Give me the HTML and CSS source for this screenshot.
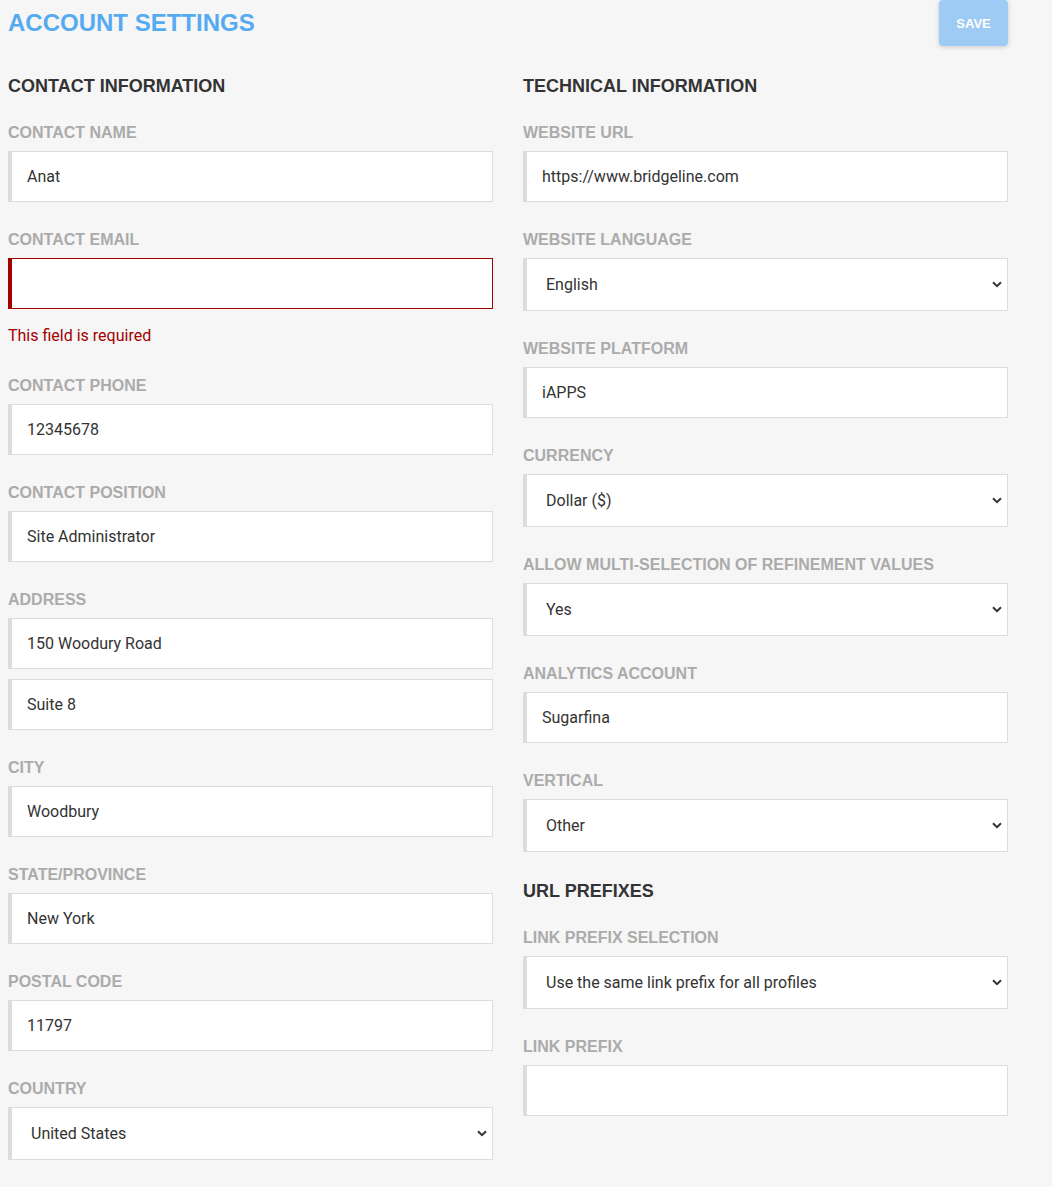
FILE: index.html
```html
<!DOCTYPE html>
<html lang="en">
<head>
<meta charset="utf-8">
<title>Account Settings</title>
<link rel="stylesheet" href="styles.css">
</head>
<body>
<div class="page">
  <header class="header">
    <h1 class="title">ACCOUNT SETTINGS</h1>
    <button class="save" type="button">SAVE</button>
  </header>
  <div class="columns">
    <section class="column">
      <h2 class="section-title">CONTACT INFORMATION</h2>
      <div class="field">
        <label class="label">CONTACT NAME</label>
        <input class="input" type="text" value="Anat">
      </div>
      <div class="field">
        <label class="label">CONTACT EMAIL</label>
        <input class="input input-error" type="text" value="">
        <div class="error">This field is required</div>
      </div>
      <div class="field">
        <label class="label">CONTACT PHONE</label>
        <input class="input" type="text" value="12345678">
      </div>
      <div class="field">
        <label class="label">CONTACT POSITION</label>
        <input class="input" type="text" value="Site Administrator">
      </div>
      <div class="field">
        <label class="label">ADDRESS</label>
        <input class="input" type="text" value="150 Woodury Road">
        <input class="input input-extra" type="text" value="Suite 8">
      </div>
      <div class="field">
        <label class="label">CITY</label>
        <input class="input" type="text" value="Woodbury">
      </div>
      <div class="field">
        <label class="label">STATE/PROVINCE</label>
        <input class="input" type="text" value="New York">
      </div>
      <div class="field">
        <label class="label">POSTAL CODE</label>
        <input class="input" type="text" value="11797">
      </div>
      <div class="field">
        <label class="label">COUNTRY</label>
        <div class="select-wrap">
          <select class="select"><option>United States</option></select>
          <svg class="chevron" width="10" height="7" viewBox="0 0 10 7"><path d="M1 1.2 L5 5.2 L9 1.2" fill="none" stroke="#333" stroke-width="2"/></svg>
        </div>
      </div>
    </section>
    <section class="column">
      <h2 class="section-title">TECHNICAL INFORMATION</h2>
      <div class="field">
        <label class="label">WEBSITE URL</label>
        <input class="input" type="text" value="https://www.bridgeline.com">
      </div>
      <div class="field">
        <label class="label">WEBSITE LANGUAGE</label>
        <div class="select-wrap">
          <select class="select"><option>English</option></select>
          <svg class="chevron" width="10" height="7" viewBox="0 0 10 7"><path d="M1 1.2 L5 5.2 L9 1.2" fill="none" stroke="#333" stroke-width="2"/></svg>
        </div>
      </div>
      <div class="field">
        <label class="label">WEBSITE PLATFORM</label>
        <input class="input" type="text" value="iAPPS">
      </div>
      <div class="field">
        <label class="label">CURRENCY</label>
        <div class="select-wrap">
          <select class="select"><option>Dollar ($)</option></select>
          <svg class="chevron" width="10" height="7" viewBox="0 0 10 7"><path d="M1 1.2 L5 5.2 L9 1.2" fill="none" stroke="#333" stroke-width="2"/></svg>
        </div>
      </div>
      <div class="field">
        <label class="label">ALLOW MULTI-SELECTION OF REFINEMENT VALUES</label>
        <div class="select-wrap">
          <select class="select"><option>Yes</option></select>
          <svg class="chevron" width="10" height="7" viewBox="0 0 10 7"><path d="M1 1.2 L5 5.2 L9 1.2" fill="none" stroke="#333" stroke-width="2"/></svg>
        </div>
      </div>
      <div class="field">
        <label class="label">ANALYTICS ACCOUNT</label>
        <input class="input" type="text" value="Sugarfina">
      </div>
      <div class="field">
        <label class="label">VERTICAL</label>
        <div class="select-wrap">
          <select class="select"><option>Other</option></select>
          <svg class="chevron" width="10" height="7" viewBox="0 0 10 7"><path d="M1 1.2 L5 5.2 L9 1.2" fill="none" stroke="#333" stroke-width="2"/></svg>
        </div>
      </div>
      <h2 class="section-title section-title-sub">URL PREFIXES</h2>
      <div class="field">
        <label class="label">LINK PREFIX SELECTION</label>
        <div class="select-wrap">
          <select class="select"><option>Use the same link prefix for all profiles</option></select>
          <svg class="chevron" width="10" height="7" viewBox="0 0 10 7"><path d="M1 1.2 L5 5.2 L9 1.2" fill="none" stroke="#333" stroke-width="2"/></svg>
        </div>
      </div>
      <div class="field">
        <label class="label">LINK PREFIX</label>
        <input class="input" type="text" value="">
      </div>
    </section>
  </div>
</div>
</body>
</html>
```
FILE: styles.css
```css
* { box-sizing: border-box; }
html, body {
  margin: 0;
  padding: 0;
  background: #f6f6f6;
}
body {
  font-family: "Liberation Sans", Arial, sans-serif;
  color: #333;
}
.page {
  width: 1000px;
  margin-left: 8px;
}
.header {
  display: flex;
  justify-content: space-between;
  align-items: flex-start;
  height: 46px;
}
.title {
  margin: 0;
  padding-top: 9px;
  font-size: 24px;
  line-height: 28px;
  font-weight: bold;
  color: #56abf0;
}
.save {
  width: 69px;
  height: 46px;
  border: none;
  border-radius: 4px;
  background: #9dcbf3;
  color: #fff;
  font-family: "Liberation Sans", Arial, sans-serif;
  font-weight: bold;
  font-size: 13px;
  box-shadow: 0 1px 5px rgba(0,0,0,0.18);
  padding: 0;
}
.columns {
  display: grid;
  grid-template-columns: 485px 485px;
  column-gap: 30px;
  padding-top: 29px;
}
.section-title {
  margin: 0 0 25px;
  font-size: 18px;
  line-height: 22px;
  font-weight: bold;
  color: #333;
}
.section-title-sub {
  padding-top: 1px;
}
.field {
  margin-bottom: 27px;
}
.label {
  display: block;
  font-size: 16px;
  line-height: 20px;
  padding-top: 1px;
  font-weight: bold;
  color: #ababab;
  margin-bottom: 8px;
  white-space: nowrap;
}
.input {
  display: block;
  width: 100%;
  height: 51px;
  margin: 0;
  padding: 0 10px 0 15px;
  background: #fff;
  border: 1px solid #dcdcdc;
  border-left: 4px solid #dcdcdc;
  border-radius: 0;
  font-family: Roboto, "Liberation Sans", sans-serif;
  font-size: 16px;
  color: #333;
  outline: none;
}
.input-extra {
  margin-top: 10px;
}
.input-error {
  border-color: #a30000;
}
.error {
  margin-top: 17px;
  padding-bottom: 2px;
  font-family: Roboto, "Liberation Sans", sans-serif;
  font-size: 16px;
  line-height: 20px;
  color: #a30000;
}
.select-wrap {
  position: relative;
}
.select {
  display: block;
  width: 100%;
  height: 53px;
  margin: 0;
  padding: 0 30px 0 19px;
  background: #fff;
  border: 1px solid #dcdcdc;
  border-left: 4px solid #dcdcdc;
  border-radius: 0;
  -webkit-appearance: none;
  appearance: none;
  font-family: Roboto, "Liberation Sans", sans-serif;
  font-size: 16px;
  color: #333;
  outline: none;
}
.chevron {
  position: absolute;
  right: 6px;
  top: 23px;
  pointer-events: none;
}
```
